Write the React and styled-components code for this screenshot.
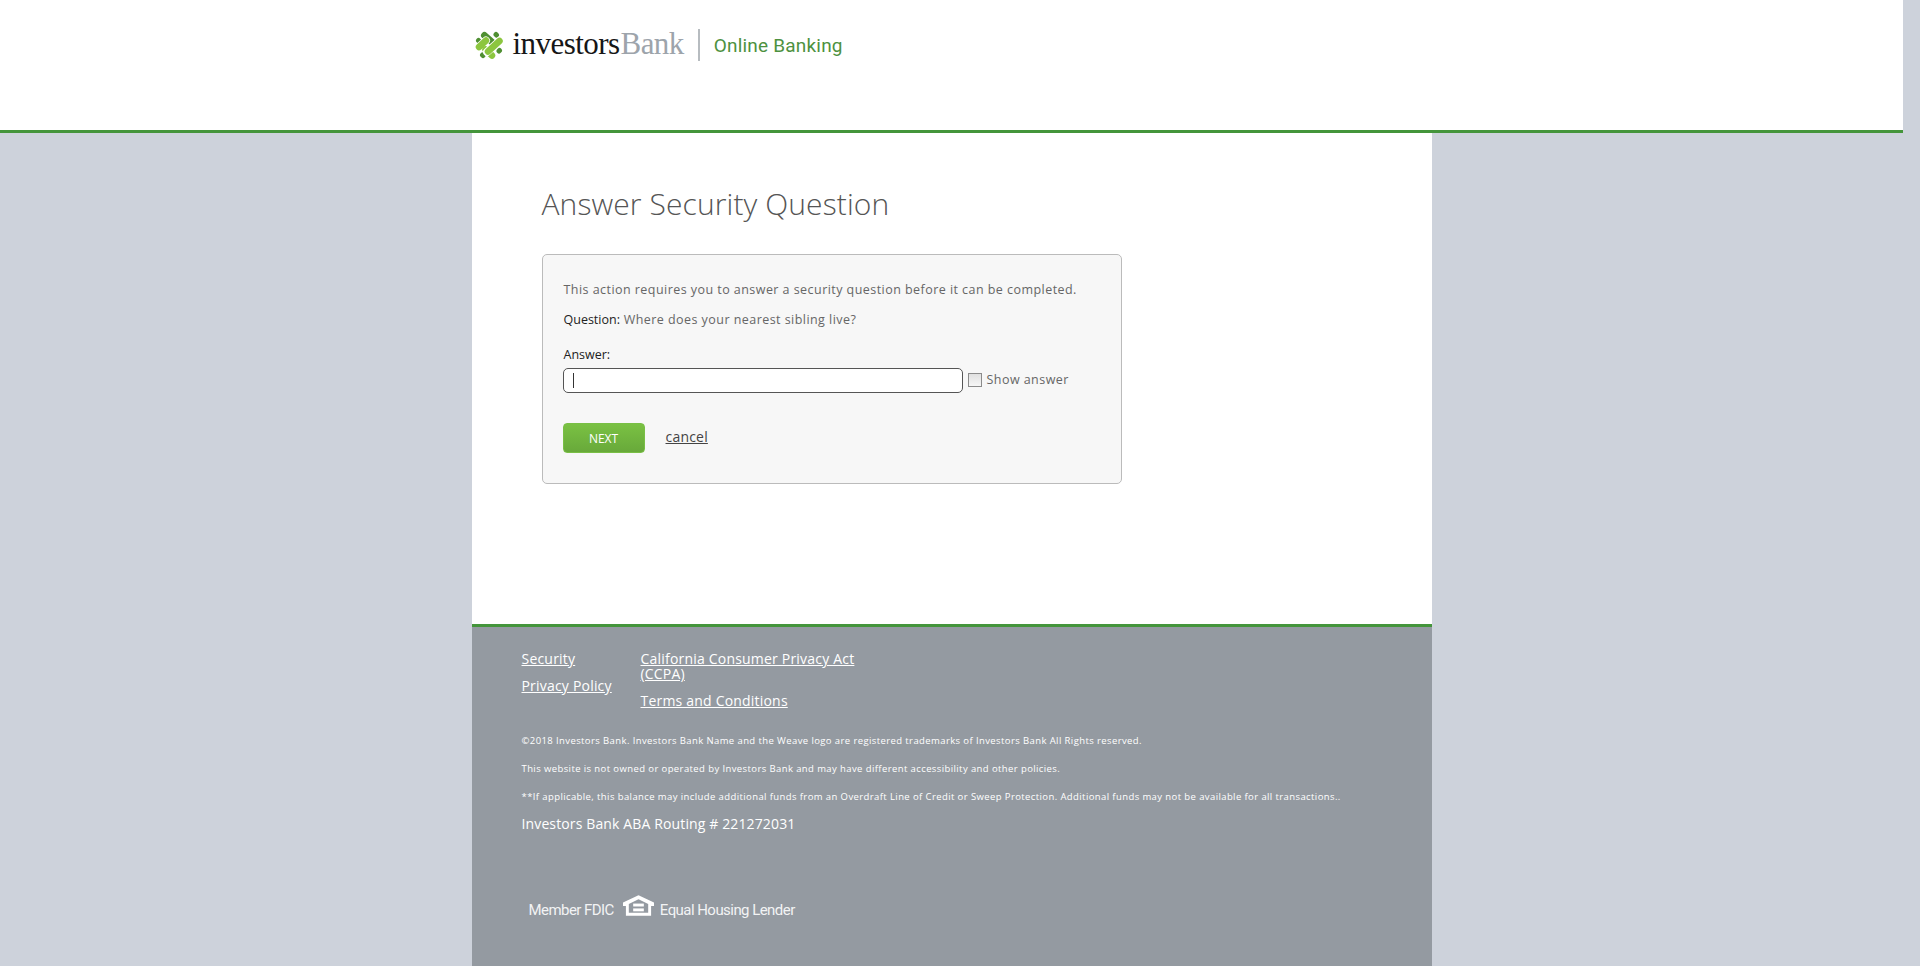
import React from "react";
import styled, { createGlobalStyle } from "styled-components";

const GlobalStyle = createGlobalStyle`
  html, body {
    margin: 0;
    height: 966px;
    overflow: hidden;
    background: #cdd2db;
    font-family: "Open Sans", "Liberation Sans", sans-serif;
  }
`;

const Page = styled.div`
  width: 1903px;
  height: 966px;
  overflow: hidden;
`;

const Header = styled.header`
  height: 130px;
  background: #fff;
  border-bottom: 3px solid #44953b;
`;

const Column = styled.div`
  width: 960px;
  margin: 0 auto;
`;

const LogoRow = styled.div`
  display: flex;
  align-items: center;
  height: 90px;
  padding-left: 3px;
`;

const Wordmark = styled.div`
  font-family: "Liberation Serif", serif;
  font-size: 31px;
  letter-spacing: -0.55px;
  color: #161616;
  margin: -3px 0 0 10px;
  line-height: 1;
  white-space: nowrap;
`;

const WordmarkBank = styled.span`
  color: #9da4ab;
  margin-left: 1px;
`;

const LogoDivider = styled.div`
  width: 2px;
  height: 32px;
  background: #b7bcc0;
  margin: 0 14px 0 14px;
`;

const Product = styled.div`
  font-family: "Roboto", sans-serif;
  font-size: 19px;
  color: #4d9140;
  letter-spacing: 0.2px;
`;

const Main = styled.main`
  background: #fff;
  height: 491px;
  padding: 50px 0 0 70px;
  box-sizing: border-box;
`;

const Title = styled.h1`
  margin: 0;
  font-weight: 300;
  font-size: 30px;
  line-height: 41px;
  color: #555;
  letter-spacing: 0.1px;
`;

const Card = styled.section`
  box-sizing: border-box;
  width: 580px;
  height: 230px;
  margin-top: 30px;
  padding: 26px 20px 0 20px;
  background: #f7f7f7;
  border: 1px solid #bbb;
  border-radius: 5px;
  font-size: 12.5px;
  color: #666;
  letter-spacing: 0.45px;
`;

const Line = styled.p`
  margin: 0;
  padding-left: 1px;
  line-height: 18px;
  margin-bottom: ${(p) => p.$gap || 0}px;
`;

const Strong = styled.span`
  color: #222;
  letter-spacing: 0;
`;

const FieldLabel = styled.div`
  padding-left: 1px;
  color: #222;
  letter-spacing: 0;
  line-height: 18px;
  margin-bottom: 4px;
`;

const FieldRow = styled.div`
  display: flex;
  align-items: center;
`;

const AnswerInput = styled.div`
  box-sizing: border-box;
  width: 400px;
  height: 25px;
  background: #fff;
  border: 1px solid #555;
  border-radius: 5px;
  padding: 4px 9px;
`;

const Caret = styled.div`
  width: 1px;
  height: 15px;
  background: #333;
`;

const Check = styled.span`
  box-sizing: border-box;
  width: 14px;
  height: 14px;
  margin: -1px 0 0 5px;
  border: 1px solid #8b8b8b;
  background: linear-gradient(#e0e0e0, #f6f6f6);
`;

const CheckLabel = styled.span`
  margin: -2px 0 0 5px;
`;

const Actions = styled.div`
  display: flex;
  align-items: center;
  margin-top: 30px;
`;

const NextButton = styled.button`
  width: 82px;
  height: 30px;
  border: 1px solid #79bf45;
  border-radius: 4px;
  background: linear-gradient(#7ac143, #68a93a);
  color: #fff;
  font: 400 12px "Open Sans", sans-serif;
  padding: 0;
`;

const CancelLink = styled.a`
  margin: -3px 0 0 21px;
  font-size: 14px;
  letter-spacing: 0.2px;
  color: #444;
  text-decoration: underline;
`;

const Footer = styled.footer`
  height: 342px;
  padding: 24px 0 0 50px;
  box-sizing: border-box;
  background: #949aa1;
  border-top: 3px solid #44953b;
  color: #fff;
`;

const LinkColumns = styled.div`
  display: flex;
  margin-bottom: -1px;
`;

const LinkColumn = styled.div`
  width: ${(p) => p.$width}px;
`;

const FooterLink = styled.a`
  display: block;
  margin-bottom: 12px;
  font-size: 14px;
  line-height: 15px;
  letter-spacing: 0.2px;
  color: #fff;
  text-decoration: underline;
`;

const Legal = styled.p`
  margin: 0;
  font-size: 9.5px;
  line-height: 13px;
  letter-spacing: 0.4px;
  padding-top: 15px;
  white-space: nowrap;
`;

const Routing = styled.p`
  margin: 11px 0 0;
  font-size: 14px;
  line-height: 20px;
  letter-spacing: 0.13px;
`;

const Badges = styled.div`
  display: flex;
  align-items: center;
  margin: 67px 0 0 7px;
  font-family: "Roboto", sans-serif;
  font-size: 15px;
  letter-spacing: -0.55px;
  color: #f2f3f4;
`;

const HouseIcon = styled.svg`
  margin: -8px 6px 0 9px;
`;

const Weave = () => (
  <svg width="28" height="28" viewBox="0 0 28 28">
    <g fill="none" strokeLinecap="round">
      <line x1="3.5" y1="9.5" x2="4" y2="10" stroke="#4f8f32" strokeWidth="5" />
      <line x1="21" y1="3.5" x2="21.5" y2="4" stroke="#4f8f32" strokeWidth="5" />
      <line x1="24.5" y1="19.5" x2="24" y2="20" stroke="#4f8f32" strokeWidth="5" />
      <line x1="7.5" y1="24" x2="8" y2="24.5" stroke="#4f8f32" strokeWidth="5" />
      <line x1="9.5" y1="4.5" x2="18" y2="12" stroke="#4f8f32" strokeWidth="7" />
      <line x1="4" y1="16" x2="11" y2="9.5" stroke="#fff" strokeWidth="8" />
      <line x1="4" y1="16" x2="11" y2="9.5" stroke="#8cc63f" strokeWidth="6.5" />
      <line x1="10.5" y1="18.5" x2="17" y2="24.5" stroke="#8cc63f" strokeWidth="6.5" />
      <line x1="12" y1="21" x2="25" y2="9.5" stroke="#fff" strokeWidth="8" />
      <line x1="13" y1="20.5" x2="24.5" y2="10" stroke="#8cc63f" strokeWidth="6.5" />
    </g>
  </svg>
);

const HousingIcon = () => (
  <HouseIcon width="31" height="22" viewBox="0 0 32 22">
    <path fill="#fff" fillRule="evenodd" d="M16 0 32 7.5V11H29V21H3V11H0V7.5ZM6 9V18H26V9L16 4Z" />
    <rect x="10.5" y="8.5" width="11" height="3" fill="#fff" />
    <rect x="10.5" y="13.5" width="11" height="3" fill="#fff" />
  </HouseIcon>
);

export default function App() {
  return (
    <Page>
      <GlobalStyle />
      <Header>
        <Column>
          <LogoRow>
            <Weave />
            <Wordmark>
              investors<WordmarkBank>Bank</WordmarkBank>
            </Wordmark>
            <LogoDivider />
            <Product>Online Banking</Product>
          </LogoRow>
        </Column>
      </Header>
      <Column>
        <Main>
          <Title>Answer Security Question</Title>
          <Card>
            <Line $gap={12}>This action requires you to answer a security question before it can be completed.</Line>
            <Line $gap={17}>
              <Strong>Question:</Strong> Where does your nearest sibling live?
            </Line>
            <FieldLabel>Answer:</FieldLabel>
            <FieldRow>
              <AnswerInput>
                <Caret />
              </AnswerInput>
              <Check />
              <CheckLabel>Show answer</CheckLabel>
            </FieldRow>
            <Actions>
              <NextButton>NEXT</NextButton>
              <CancelLink>cancel</CancelLink>
            </Actions>
          </Card>
        </Main>
        <Footer>
          <LinkColumns>
            <LinkColumn $width={119}>
              <FooterLink>Security</FooterLink>
              <FooterLink>Privacy Policy</FooterLink>
            </LinkColumn>
            <LinkColumn $width={230}>
              <FooterLink>California Consumer Privacy Act (CCPA)</FooterLink>
              <FooterLink>Terms and Conditions</FooterLink>
            </LinkColumn>
          </LinkColumns>
          <Legal>©2018 Investors Bank. Investors Bank Name and the Weave logo are registered trademarks of Investors Bank All Rights reserved.</Legal>
          <Legal>This website is not owned or operated by Investors Bank and may have different accessibility and other policies.</Legal>
          <Legal>**If applicable, this balance may include additional funds from an Overdraft Line of Credit or Sweep Protection. Additional funds may not be available for all transactions..</Legal>
          <Routing>Investors Bank ABA Routing # 221272031</Routing>
          <Badges>
            Member FDIC
            <HousingIcon />
            Equal Housing Lender
          </Badges>
        </Footer>
      </Column>
    </Page>
  );
}
